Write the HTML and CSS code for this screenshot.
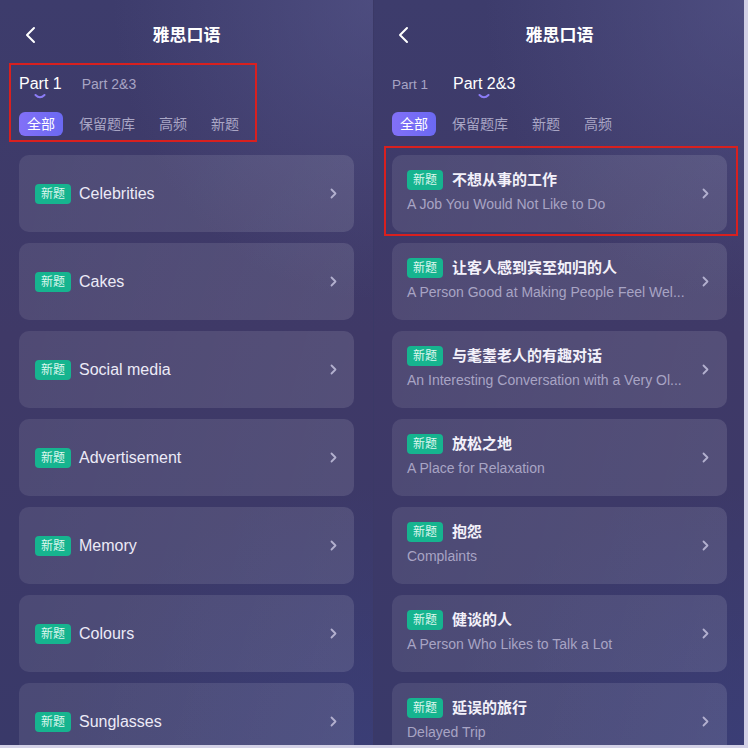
FILE: index.html
```html
<!DOCTYPE html>
<html lang="zh-CN">
  <head>
    <meta charset="UTF-8" />
    <meta name="viewport" content="width=device-width, initial-scale=1.0" />
    <title>雅思口语</title>
    <link rel="stylesheet" href="styles.css">
  </head>
  <body>
    <div class="page">
      <!-- Part 1 screen -->
      <div class="screen">
        <div class="header">
          <svg class="back" width="12" height="18" viewBox="0 0 12 18"><path d="M10 2 L3 9 L10 16" fill="none" stroke="#ffffff" stroke-width="2" stroke-linecap="round" stroke-linejoin="round"/></svg>
          <span class="title">雅思口语</span>
          <span></span>
        </div>

        <div class="tabs">
          <div class="tab active">
            <span>Part 1</span>
            <svg class="arc" width="12" height="5" viewBox="0 0 12 5"><path d="M1.5 1 Q6 5.5 10.5 1" fill="none" stroke="#8b7cf6" stroke-width="2" stroke-linecap="round"/></svg>
          </div>
          <div class="tab"><span>Part 2&amp;3</span></div>
        </div>

        <div class="chips">
          <span class="chip active">全部</span>
          <span class="chip">保留题库</span>
          <span class="chip">高频</span>
          <span class="chip">新题</span>
        </div>

        <ul class="topics">
          <li class="topic"><span class="badge">新题</span><span class="topic-name">Celebrities</span><svg class="arrow" width="7" height="11" viewBox="0 0 7 11"><path d="M1.5 1.5 L5.5 5.5 L1.5 9.5" fill="none" stroke="#b3b0cf" stroke-width="1.8" stroke-linecap="round" stroke-linejoin="round"/></svg></li>
          <li class="topic"><span class="badge">新题</span><span class="topic-name">Cakes</span><svg class="arrow" width="7" height="11" viewBox="0 0 7 11"><path d="M1.5 1.5 L5.5 5.5 L1.5 9.5" fill="none" stroke="#b3b0cf" stroke-width="1.8" stroke-linecap="round" stroke-linejoin="round"/></svg></li>
          <li class="topic"><span class="badge">新题</span><span class="topic-name">Social media</span><svg class="arrow" width="7" height="11" viewBox="0 0 7 11"><path d="M1.5 1.5 L5.5 5.5 L1.5 9.5" fill="none" stroke="#b3b0cf" stroke-width="1.8" stroke-linecap="round" stroke-linejoin="round"/></svg></li>
          <li class="topic"><span class="badge">新题</span><span class="topic-name">Advertisement</span><svg class="arrow" width="7" height="11" viewBox="0 0 7 11"><path d="M1.5 1.5 L5.5 5.5 L1.5 9.5" fill="none" stroke="#b3b0cf" stroke-width="1.8" stroke-linecap="round" stroke-linejoin="round"/></svg></li>
          <li class="topic"><span class="badge">新题</span><span class="topic-name">Memory</span><svg class="arrow" width="7" height="11" viewBox="0 0 7 11"><path d="M1.5 1.5 L5.5 5.5 L1.5 9.5" fill="none" stroke="#b3b0cf" stroke-width="1.8" stroke-linecap="round" stroke-linejoin="round"/></svg></li>
          <li class="topic"><span class="badge">新题</span><span class="topic-name">Colours</span><svg class="arrow" width="7" height="11" viewBox="0 0 7 11"><path d="M1.5 1.5 L5.5 5.5 L1.5 9.5" fill="none" stroke="#b3b0cf" stroke-width="1.8" stroke-linecap="round" stroke-linejoin="round"/></svg></li>
          <li class="topic"><span class="badge">新题</span><span class="topic-name">Sunglasses</span><svg class="arrow" width="7" height="11" viewBox="0 0 7 11"><path d="M1.5 1.5 L5.5 5.5 L1.5 9.5" fill="none" stroke="#b3b0cf" stroke-width="1.8" stroke-linecap="round" stroke-linejoin="round"/></svg></li>
        </ul>

        <div class="mark mark-filters"></div>
      </div>

      <!-- Part 2&3 screen -->
      <div class="screen screen-right">
        <div class="header">
          <svg class="back" width="12" height="18" viewBox="0 0 12 18"><path d="M10 2 L3 9 L10 16" fill="none" stroke="#ffffff" stroke-width="2" stroke-linecap="round" stroke-linejoin="round"/></svg>
          <span class="title">雅思口语</span>
          <span></span>
        </div>

        <div class="tabs">
          <div class="tab small"><span>Part 1</span></div>
          <div class="tab active">
            <span>Part 2&amp;3</span>
            <svg class="arc" width="12" height="5" viewBox="0 0 12 5"><path d="M1.5 1 Q6 5.5 10.5 1" fill="none" stroke="#8b7cf6" stroke-width="2" stroke-linecap="round"/></svg>
          </div>
        </div>

        <div class="chips">
          <span class="chip active">全部</span>
          <span class="chip">保留题库</span>
          <span class="chip">新题</span>
          <span class="chip">高频</span>
        </div>

        <ul class="topics">
          <li class="topic">
            <div class="topic-text">
              <div class="topic-head"><span class="badge">新题</span><span class="topic-cn">不想从事的工作</span></div>
              <div class="topic-en">A Job You Would Not Like to Do</div>
            </div>
            <svg class="arrow" width="7" height="11" viewBox="0 0 7 11"><path d="M1.5 1.5 L5.5 5.5 L1.5 9.5" fill="none" stroke="#b3b0cf" stroke-width="1.8" stroke-linecap="round" stroke-linejoin="round"/></svg>
          </li>
          <li class="topic">
            <div class="topic-text">
              <div class="topic-head"><span class="badge">新题</span><span class="topic-cn">让客人感到宾至如归的人</span></div>
              <div class="topic-en">A Person Good at Making People Feel Wel...</div>
            </div>
            <svg class="arrow" width="7" height="11" viewBox="0 0 7 11"><path d="M1.5 1.5 L5.5 5.5 L1.5 9.5" fill="none" stroke="#b3b0cf" stroke-width="1.8" stroke-linecap="round" stroke-linejoin="round"/></svg>
          </li>
          <li class="topic">
            <div class="topic-text">
              <div class="topic-head"><span class="badge">新题</span><span class="topic-cn">与耄耋老人的有趣对话</span></div>
              <div class="topic-en">An Interesting Conversation with a Very Ol...</div>
            </div>
            <svg class="arrow" width="7" height="11" viewBox="0 0 7 11"><path d="M1.5 1.5 L5.5 5.5 L1.5 9.5" fill="none" stroke="#b3b0cf" stroke-width="1.8" stroke-linecap="round" stroke-linejoin="round"/></svg>
          </li>
          <li class="topic">
            <div class="topic-text">
              <div class="topic-head"><span class="badge">新题</span><span class="topic-cn">放松之地</span></div>
              <div class="topic-en">A Place for Relaxation</div>
            </div>
            <svg class="arrow" width="7" height="11" viewBox="0 0 7 11"><path d="M1.5 1.5 L5.5 5.5 L1.5 9.5" fill="none" stroke="#b3b0cf" stroke-width="1.8" stroke-linecap="round" stroke-linejoin="round"/></svg>
          </li>
          <li class="topic">
            <div class="topic-text">
              <div class="topic-head"><span class="badge">新题</span><span class="topic-cn">抱怨</span></div>
              <div class="topic-en">Complaints</div>
            </div>
            <svg class="arrow" width="7" height="11" viewBox="0 0 7 11"><path d="M1.5 1.5 L5.5 5.5 L1.5 9.5" fill="none" stroke="#b3b0cf" stroke-width="1.8" stroke-linecap="round" stroke-linejoin="round"/></svg>
          </li>
          <li class="topic">
            <div class="topic-text">
              <div class="topic-head"><span class="badge">新题</span><span class="topic-cn">健谈的人</span></div>
              <div class="topic-en">A Person Who Likes to Talk a Lot</div>
            </div>
            <svg class="arrow" width="7" height="11" viewBox="0 0 7 11"><path d="M1.5 1.5 L5.5 5.5 L1.5 9.5" fill="none" stroke="#b3b0cf" stroke-width="1.8" stroke-linecap="round" stroke-linejoin="round"/></svg>
          </li>
          <li class="topic">
            <div class="topic-text">
              <div class="topic-head"><span class="badge">新题</span><span class="topic-cn">延误的旅行</span></div>
              <div class="topic-en">Delayed Trip</div>
            </div>
            <svg class="arrow" width="7" height="11" viewBox="0 0 7 11"><path d="M1.5 1.5 L5.5 5.5 L1.5 9.5" fill="none" stroke="#b3b0cf" stroke-width="1.8" stroke-linecap="round" stroke-linejoin="round"/></svg>
          </li>
        </ul>

        <div class="mark mark-card"></div>
      </div>
    </div>
  </body>
</html>
```

FILE: styles.css
```css
/* Two phone screens of the IELTS speaking topic list */
body {
  margin: 0;
  padding: 0;
  background-color: #d3d1e6;
  font-family: "Liberation Sans", "Noto Sans CJK SC", sans-serif;
}

.page {
  display: flex;
  gap: 1px;
  width: 744px;
  height: 745px;
  background-color: #3b3966;
  overflow: hidden;
}

.screen {
  position: relative;
  box-sizing: border-box;
  width: 373px;
  height: 745px;
  padding: 0 19px 0 19px;
  overflow: hidden;
  background:
    radial-gradient(ellipse 260px 300px at 100% 0%, rgba(96, 96, 150, 0.45), rgba(96, 96, 150, 0) 100%),
    radial-gradient(ellipse 300px 260px at 100% 100%, rgba(60, 66, 130, 0.5), rgba(60, 66, 130, 0) 100%),
    linear-gradient(180deg, #3d3c6c 0%, #3f3967 45%, #393969 100%);
}

.screen-right {
  width: 370px;
  padding: 0 17px 0 18px;
}

/* header */
.header {
  display: grid;
  grid-template-columns: 40px 1fr 40px;
  align-items: center;
  height: 70px;
}

.back {
  margin-left: 5px;
}

.title {
  margin-bottom: 4px;
  text-align: center;
  color: #ffffff;
  font-size: 17px;
  font-weight: bold;
}

/* part tabs */
.tabs {
  display: flex;
  align-items: baseline;
  gap: 20px;
  height: 28px;
  padding-top: 3px;
  box-sizing: border-box;
}

.tab {
  display: flex;
  flex-direction: column;
  align-items: center;
  color: #a7a4c4;
  font-size: 14px;
  line-height: 22px;
}

.tab.small {
  font-size: 13.5px;
  margin-right: 5px;
}

.tab.active {
  color: #ffffff;
  font-size: 16px;
  font-weight: 500;
}

.arc {
  display: block;
  margin-top: -1px;
}

/* filter chips */
.chips {
  display: flex;
  gap: 8px;
  margin-top: 14px;
}

.chip {
  height: 24px;
  line-height: 24px;
  padding: 0 8px;
  border-radius: 6px;
  color: #a9a6c5;
  font-size: 14px;
}

.chip.active {
  color: #ffffff;
  background: linear-gradient(90deg, #8270f7, #6b69f3);
}

/* topic cards */
.topics {
  list-style-type: none;
  margin: 19px 0 0;
  padding: 0;
  display: flex;
  flex-direction: column;
  gap: 11px;
}

.topic {
  display: flex;
  align-items: center;
  box-sizing: border-box;
  width: 335px;
  height: 77px;
  padding: 0 17px 0 16px;
  border-radius: 10px;
  background: linear-gradient(105deg, rgba(255, 255, 255, 0.085), rgba(255, 255, 255, 0.115));
}

.screen-right .topic {
  padding: 0 18px 0 15px;
}

.badge {
  flex-shrink: 0;
  width: 36px;
  height: 20px;
  line-height: 20px;
  border-radius: 4px;
  background-color: #16b48f;
  color: #dcf7ee;
  font-size: 12px;
  text-align: center;
}

.topic-name {
  flex: 1;
  margin-left: 8px;
  color: #eceaf7;
  font-size: 16px;
}

.topic-text {
  flex: 1;
  min-width: 0;
  margin-bottom: 4px;
}

.topic-head {
  display: flex;
  align-items: center;
  height: 20px;
}

.topic-cn {
  margin-left: 9px;
  line-height: 20px;
  color: #f3f1fa;
  font-size: 15px;
  font-weight: bold;
}

.topic-en {
  margin-top: 5px;
  line-height: 18px;
  color: #a8a4c4;
  font-size: 14px;
  white-space: nowrap;
}

.arrow {
  flex-shrink: 0;
  margin-left: 18px;
}

/* red annotation boxes drawn over the screenshot */
.mark {
  position: absolute;
  box-sizing: border-box;
  border: 2px solid #d8201f;
}

.mark-filters {
  left: 9px;
  top: 63px;
  width: 248px;
  height: 79px;
}

.mark-card {
  left: 10px;
  top: 146px;
  width: 354px;
  height: 90px;
}
```
